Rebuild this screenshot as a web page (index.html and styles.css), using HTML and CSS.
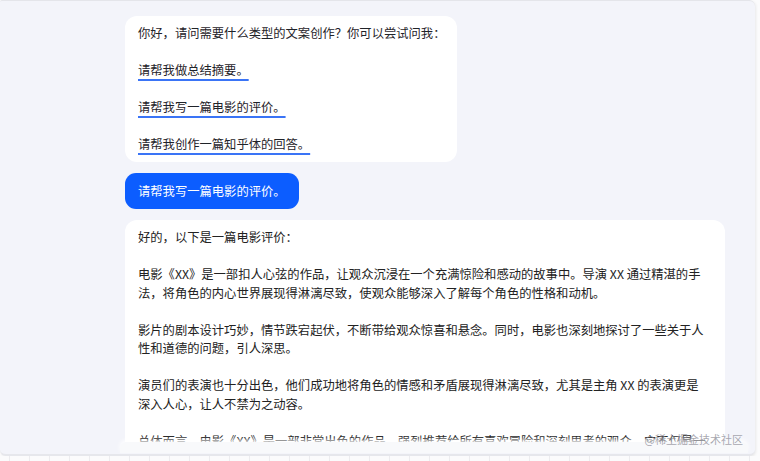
FILE: index.html
```html
<!DOCTYPE html>
<html lang="zh-CN">
<head>
  <meta charset="UTF-8">
  <title>文案创作</title>
  <link rel="stylesheet" href="styles.css">
</head>
<body>

<div class="app">
  <div class="messages">
    <div class="msg bot">
      <p>你好，请问需要什么类型的文案创作？你可以尝试问我：</p>
      <p><span class="hint">请帮我做总结摘要。</span></p>
      <p><span class="hint">请帮我写一篇电影的评价。</span></p>
      <p><span class="hint">请帮我创作一篇知乎体的回答。</span></p>
    </div>

    <div class="msg user">请帮我写一篇电影的评价。</div>

    <div class="msg bot answer">
      <p>好的，以下是一篇电影评价：</p>
      <p>电影《XX》是一部扣人心弦的作品，让观众沉浸在一个充满惊险和感动的故事中。导演 XX 通过精湛的手法，将角色的内心世界展现得淋漓尽致，使观众能够深入了解每个角色的性格和动机。</p>
      <p>影片的剧本设计巧妙，情节跌宕起伏，不断带给观众惊喜和悬念。同时，电影也深刻地探讨了一些关于人性和道德的问题，引人深思。</p>
      <p>演员们的表演也十分出色，他们成功地将角色的情感和矛盾展现得淋漓尽致，尤其是主角 XX 的表演更是深入人心，让人不禁为之动容。</p>
      <p>总体而言，电影《XX》是一部非常出色的作品，强烈推荐给所有喜欢冒险和深刻思考的观众。它不仅是一部娱乐作品，更是一部引人深思的艺术佳作。</p>
    </div>
  </div>

  <div class="footer"></div>

  <div class="watermark">@稀土掘金技术社区</div>
</div>

</body>
</html>
```

FILE: styles.css
```css
body {
  margin: 0;
  font-family: "Noto Sans CJK SC", "Noto Sans", sans-serif;
  background-color: #fbfbfc;
  background-image: repeating-linear-gradient(90deg, transparent 0 9px, #ececef 9px 10px, transparent 10px 20px);
}
.app {
  position: relative;
  width: 755px;
  height: 453px;
  background-color: #f3f4fa;
  border-top: 1px solid #e4e5ea;
  border-bottom: 2px solid #e6e7ec;
  border-radius: 2px 6px 6px 6px;
  box-shadow: 1px 1px 3px rgba(0,0,0,0.08);
  display: flex;
  flex-direction: column;
  overflow: hidden;
}
.messages {
  height: 441px;
  overflow: hidden;
  padding: 15px 0 0 125px;
  box-sizing: border-box;
  display: flex;
  flex-direction: column;
  align-items: flex-start;
  gap: 11px;
}
.msg {
  font-size: 12.3px;
  line-height: 18.5px;
  border-radius: 12px;
  flex-shrink: 0;
}
.msg p {
  margin: 0 0 18.5px;
}
.msg p:last-child {
  margin-bottom: 0;
}
.bot {
  background-color: #fff;
  color: #1f2329;
  padding: 8px 12px 8px 13px;
}
.hint {
  text-decoration: underline;
  text-decoration-color: #3a74f6;
  text-decoration-thickness: 1.5px;
  text-underline-offset: 4px;
  text-decoration-skip-ink: none;
}
.user {
  background-color: #0c5dff;
  color: #fff;
  padding: 9px 13px;
  border-radius: 11px;
}
.answer {
  width: 600px;
  box-sizing: border-box;
  padding: 8px 16px 10px 13px;
  color: #222;
}
.footer {
  height: 11px;
  margin: 0 7px 0 120px;
  background-color: #f8f9fb;
  border-radius: 6px 6px 0 0;
  box-shadow: 0 -2px 4px rgba(255,255,255,0.9);
}
.watermark {
  position: absolute;
  right: 12px;
  bottom: 7px;
  font-size: 11px;
  color: rgba(140,140,150,0.75);
}
```
